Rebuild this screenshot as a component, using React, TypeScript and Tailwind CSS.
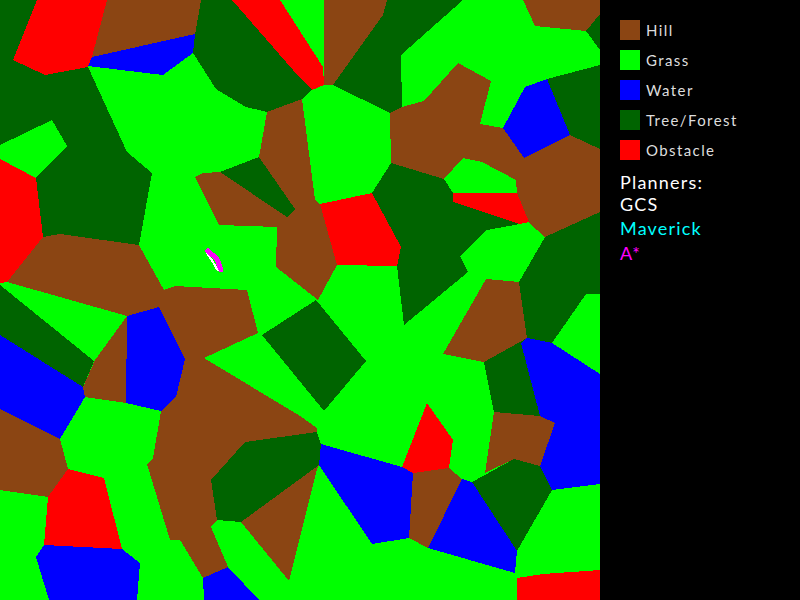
const HILL = "#8b4513";
const WATER = "#0000ff";
const FOREST = "#006400";
const OBSTACLE = "#ff0000";

// map cells, painted over a grass base
const cells: [string, string][] = [
  [FOREST, "0,0 37,0 13,60 45,75 88,67 127,152 152,173 139,245 43,237 36,178 67,146 52,120 0,145"],
  [OBSTACLE, "37,0 107,0 92,57 88,67 45,75 13,60"],
  [FOREST, "201,0 232,0 300,78 312,90 302,99 267,112 246,107 216,89 193,53 195,34"],
  [HILL, "107,0 201,0 195,35 92,57"],
  [WATER, "92,57 195,34 193,53 163,75 88,66"],
  [OBSTACLE, "232,0 280,0 323,67 324,85 312,90 300,78"],
  [HILL, "324,0 387,0 383,15 333,85 324,85"],
  [HILL, "267,112 302,99 315,200 320,204 337,265 318,300 276,267 277,227 219,225 195,177 203,173 220,172 259,157"],
  [FOREST, "220,172 259,157 295,209 287,217"],
  [FOREST, "387,0 463,0 401,55 402,107 390,113 333,85 383,15"],
  [HILL, "523,0 600,0 600,14 586,31 535,26"],
  [FOREST, "600,14 586,31 600,50"],
  [FOREST, "547,79 600,65 600,149 570,135"],
  [WATER, "525,87 547,79 570,135 524,158 503,128"],
  [HILL, "390,113 402,107 424,101 458,63 491,81 480,124 503,128 524,158 570,135 600,149 600,212 545,237 528,222 517,193 516,180 482,162 463,158 444,179 391,163"],
  [OBSTACLE, "453,193 517,193 529,222 520,224 453,202"],
  [FOREST, "391,163 444,179 453,193 453,202 520,224 487,230 460,256 468,272 404,325 397,266 401,247 372,193"],
  [OBSTACLE, "372,193 401,247 397,266 337,265 320,204"],
  [FOREST, "545,237 600,212 600,294 586,294 552,343 527,338 519,282"],
  [HILL, "486,279 519,282 527,338 484,362 443,354"],
  [FOREST, "527,338 484,362 494,412 540,416 521,343"],
  [WATER, "527,338 552,343 600,374 600,484 552,490 540,466 555,423 540,416 521,343"],
  [HILL, "494,412 540,416 555,423 540,466 514,459 485,473"],
  [FOREST, "472,482 514,459 540,466 552,490 517,551"],
  [WATER, "462,479 472,482 517,551 515,573 428,548"],
  [HILL, "449,468 462,479 428,548 409,538 413,473"],
  [OBSTACLE, "427,403 453,440 449,468 413,473 402,467"],
  [WATER, "321,444 402,467 413,473 409,538 372,544 319,465"],
  [OBSTACLE, "517,578 543,574 600,570 600,600 517,600"],
  [FOREST, "316,300 366,361 324,411 262,335"],
  [HILL, "7,282 43,237 60,234 139,245 164,290 175,286 247,290 258,333 204,358 300,416 317,428 317,432 245,442 211,480 217,520 211,527 228,567 203,578 180,540 170,540 147,464 153,458 161,411 176,397 185,359 159,307 127,316"],
  [HILL, "127,316 126,403 85,397 83,387 95,360"],
  [FOREST, "245,442 317,432 321,444 319,465 241,522 217,520 211,480"],
  [HILL, "241,522 319,465 317,469 289,581"],
  [FOREST, "0,285 94,361 83,387 0,335"],
  [WATER, "0,335 83,387 85,397 60,439 0,409"],
  [WATER, "127,316 159,307 185,359 176,397 161,411 126,403"],
  [HILL, "0,409 60,439 68,469 48,497 0,490"],
  [OBSTACLE, "68,469 104,478 122,549 44,545 48,497"],
  [WATER, "44,545 122,549 140,563 137,600 49,600 36,557"],
  [WATER, "203,578 228,567 259,600 204,600"],
  [OBSTACLE, "0,159 36,178 43,237 7,282 0,283"],
];

const legend = [
  { label: "Hill", swatch: "bg-[#8b4513]" },
  { label: "Grass", swatch: "bg-[#00ff00]" },
  { label: "Water", swatch: "bg-[#0000ff]" },
  { label: "Tree/Forest", swatch: "bg-[#006400]" },
  { label: "Obstacle", swatch: "bg-[#ff0000]" },
];

export default function App() {
  return (
    <div className="flex w-[800px] h-[600px] bg-black overflow-hidden font-['Lato',sans-serif]">
      <svg width="600" height="600" viewBox="0 0 600 600" shapeRendering="crispEdges" className="shrink-0 bg-[#00ff00]">
        {cells.map(([fill, points], i) => (
          <polygon key={i} fill={fill} points={points} />
        ))}
        <polyline points="207,253 213,262 218,271" fill="none" stroke="#ffffff" strokeWidth="2" />
        <polyline points="208,251 217,259 221,270" fill="none" stroke="#ff00ff" strokeWidth="5" strokeLinecap="round" />
      </svg>

      <div className="w-[200px] pl-5 pt-5">
        <div className="flex flex-col gap-2.5">
          {legend.map((item) => (
            <div key={item.label} className="flex items-center gap-1.5 h-5">
              <div className={`w-5 h-5 ${item.swatch}`} />
              <span className="text-[15px] leading-5 font-normal tracking-[1.4px] text-[#dddddd]">{item.label}</span>
            </div>
          ))}
        </div>
        <div className="mt-[11px] flex flex-col text-[18px] font-normal tracking-[1.2px] leading-[22px]">
          <span className="text-white">Planners:</span>
          <span className="text-white">GCS</span>
          <span className="mt-[2px] text-[#00ffff]">Maverick</span>
          <span className="mt-[3px] text-[#ff00ff]">A*</span>
        </div>
      </div>
    </div>
  );
}
